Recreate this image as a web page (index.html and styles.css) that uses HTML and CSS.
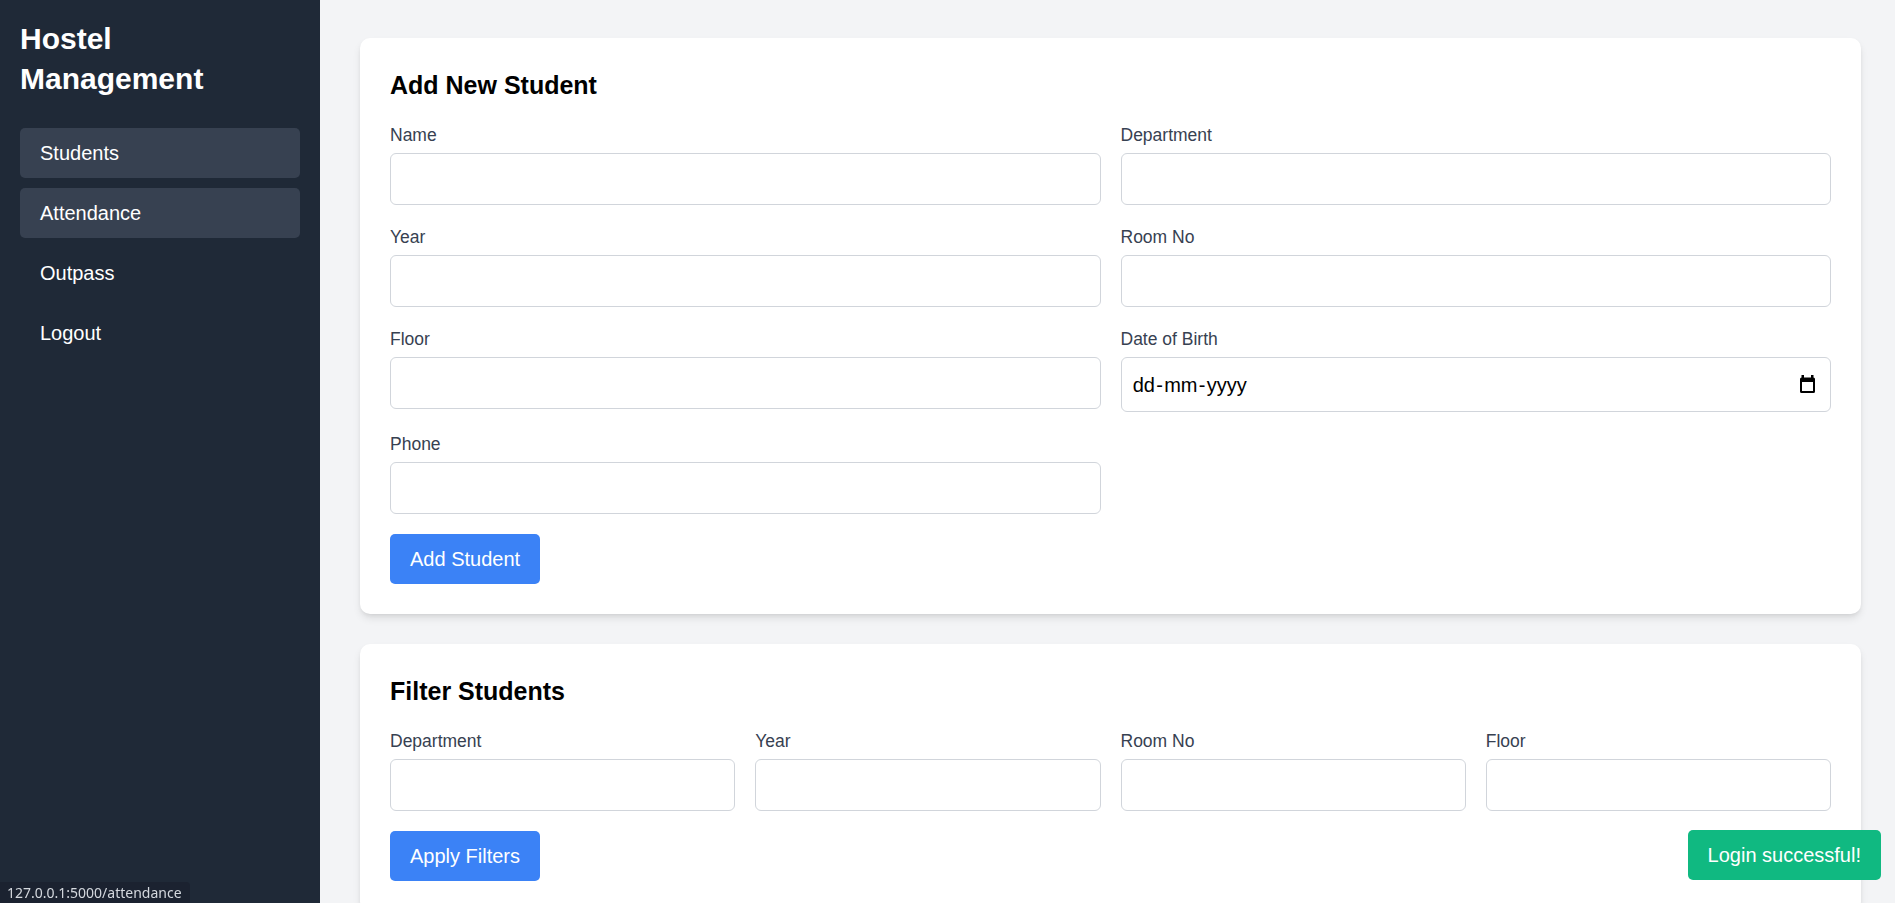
FILE: index.html
```html
<!DOCTYPE html>
<html lang="en">
<head>
<meta charset="utf-8">
<title>Hostel Management</title>
<link rel="stylesheet" href="styles.css">
</head>
<body>
<div class="app">
  <aside class="sidebar">
    <h1 class="brand">Hostel Management</h1>
    <nav class="nav">
      <a class="nav-link active" href="#">Students</a>
      <a class="nav-link active" href="#">Attendance</a>
      <a class="nav-link" href="#">Outpass</a>
      <a class="nav-link" href="#">Logout</a>
    </nav>
  </aside>
  <main class="main">
    <section class="card">
      <h2 class="card-title">Add New Student</h2>
      <div class="grid grid-2">
        <div class="field"><label class="label">Name</label><div class="input"></div></div>
        <div class="field"><label class="label">Department</label><div class="input"></div></div>
        <div class="field"><label class="label">Year</label><div class="input"></div></div>
        <div class="field"><label class="label">Room No</label><div class="input"></div></div>
        <div class="field"><label class="label">Floor</label><div class="input"></div></div>
        <div class="field"><label class="label">Date of Birth</label>
          <div class="input date-input">
            <span class="date-text"><span class="seg">dd</span>-<span class="seg">mm</span>-<span class="seg">yyyy</span></span>
            <svg class="cal-icon" width="15" height="18" viewBox="0 0 15 18"><path fill="#000" fill-rule="evenodd" d="M1.5 0H4V2.5H11V0H13.5V2.5A1.5 1.5 0 0 1 15 4V16.5A1.5 1.5 0 0 1 13.5 18H1.5A1.5 1.5 0 0 1 0 16.5V4A1.5 1.5 0 0 1 1.5 2.5Z M2 7H13V16H2Z"/></svg>
          </div>
        </div>
        <div class="field"><label class="label">Phone</label><div class="input"></div></div>
      </div>
      <button class="btn">Add Student</button>
    </section>
    <section class="card">
      <h2 class="card-title">Filter Students</h2>
      <div class="grid grid-4">
        <div class="field"><label class="label">Department</label><div class="input"></div></div>
        <div class="field"><label class="label">Year</label><div class="input"></div></div>
        <div class="field"><label class="label">Room No</label><div class="input"></div></div>
        <div class="field"><label class="label">Floor</label><div class="input"></div></div>
      </div>
      <button class="btn">Apply Filters</button>
    </section>
  </main>
</div>
<div class="toast">Login successful!</div>
<div class="status">127.0.0.1:5000/attendance</div>
</body>
</html>
```
FILE: styles.css
```css
html, body {
  margin: 0;
  padding: 0;
  overflow: hidden;
  height: 100%;
}
body {
  font-family: "Liberation Sans", Arial, sans-serif;
  color: #000;
}
.app {
  display: flex;
  min-height: 100vh;
}
.sidebar {
  width: 320px;
  flex-shrink: 0;
  background: #1f2937;
  color: #fff;
  padding: 19px 20px 20px;
  box-sizing: border-box;
}
.brand {
  margin: 0 0 29px;
  font-size: 30px;
  line-height: 40px;
  font-weight: 700;
}
.nav {
  display: flex;
  flex-direction: column;
  gap: 10px;
}
.nav-link {
  display: flex;
  align-items: center;
  height: 50px;
  padding: 0 20px;
  border-radius: 5px;
  color: #fff;
  text-decoration: none;
  font-size: 20px;
  line-height: 30px;
}
.nav-link.active {
  background: #374151;
}
.main {
  flex: 1;
  background: #f3f4f6;
  padding: 38px 34px 40px 40px;
  min-width: 0;
}
.card {
  background: #fff;
  border-radius: 10px;
  padding: 30px;
  margin-bottom: 30px;
  box-shadow: 0 5px 8px -1px rgba(0,0,0,0.1), 0 2px 5px -2px rgba(0,0,0,0.1);
}
.card-title {
  margin: 0 0 20px;
  font-size: 25px;
  line-height: 35px;
  font-weight: 700;
}
.grid {
  display: grid;
  gap: 20px;
}
.grid-2 { grid-template-columns: 1fr 1fr; }
.grid-4 { grid-template-columns: repeat(4, 1fr); }
.label {
  display: block;
  font-size: 17.5px;
  line-height: 25px;
  color: #374151;
  margin-bottom: 5px;
}
.input {
  box-sizing: border-box;
  height: 52px;
  width: 100%;
  border: 1px solid #d1d5db;
  border-radius: 6px;
  background: #fff;
}
.date-input {
  height: 55px;
  display: flex;
  align-items: center;
  justify-content: space-between;
  padding: 0 15px 0 10px;
}
.date-text {
  font-size: 20px;
  line-height: 30px;
  color: #000;
}
.seg {
  padding: 0 1.25px;
}
.cal-icon {
  display: block;
  margin-top: -2px;
}
.btn {
  margin-top: 20px;
  display: inline-block;
  border: none;
  border-radius: 5px;
  background: #3b82f6;
  color: #fff;
  font-family: "Liberation Sans", Arial, sans-serif;
  font-size: 20px;
  line-height: 30px;
  padding: 10px 20px;
}
.toast {
  position: fixed;
  right: 14px;
  bottom: 23px;
  background: #10b981;
  color: #fff;
  font-size: 20px;
  line-height: 30px;
  padding: 10px 20px;
  border-radius: 5px;
}
.status {
  position: fixed;
  left: 0;
  bottom: 0;
  height: 21px;
  line-height: 21px;
  padding: 0 8px 0 7px;
  background: #1b2230;
  color: #d4d8de;
  font-family: "Noto Sans", sans-serif;
  font-size: 14px;
  border-top-right-radius: 4px;
}
```
